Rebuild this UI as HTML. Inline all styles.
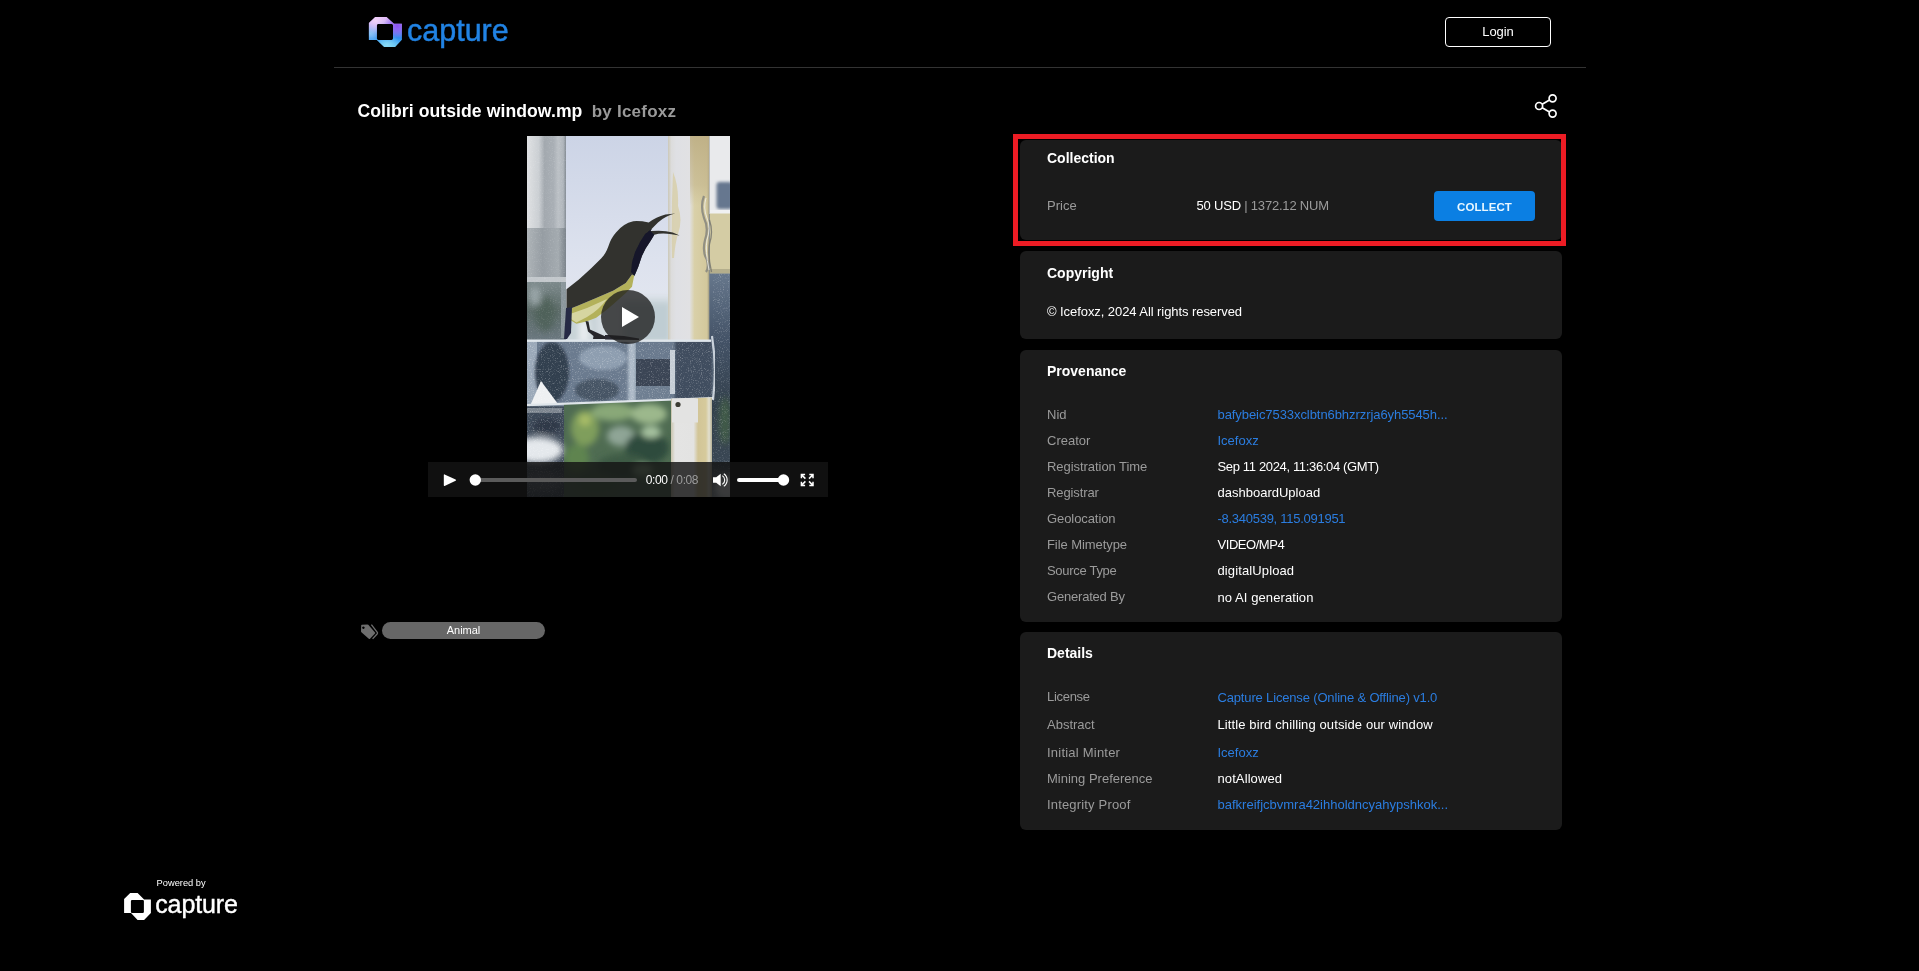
<!DOCTYPE html>
<html lang="en">
<head>
<meta charset="utf-8">
<title>Colibri outside window.mp by Icefoxz - Capture</title>
<style>
*{box-sizing:border-box;margin:0;padding:0}
html,body{width:1919px;height:971px;overflow:hidden;background:#000;color:#fff;
  font-family:"Liberation Sans",sans-serif;font-size:13px;-webkit-font-smoothing:antialiased}
a{color:#2b7de0;text-decoration:none}
.page{position:relative;width:1919px;height:971px;will-change:transform}

/* header */
header{position:absolute;left:334px;top:0;width:1252px;height:68px;border-bottom:1px solid #333}
.logo{position:absolute;left:34px;top:15px;width:142px;height:34px}
.login{position:absolute;left:1111px;top:17px;width:106px;height:30px;border:1px solid #fff;border-radius:4px;
  background:#000;color:#fff;font:13px "Liberation Sans",sans-serif;text-align:center;line-height:25px;letter-spacing:-.1px;padding:0 0 2px}

/* title row */
.title{position:absolute;left:357.5px;top:99px;height:24px;line-height:24px;font-size:17.6px;font-weight:bold;white-space:nowrap;letter-spacing:.07px}
.title .by{color:#9a9a9a;margin-left:4.3px;font-size:17px;letter-spacing:.23px}
.share{position:absolute;left:1533px;top:93px;width:26px;height:26px}

/* left column */
.left{position:absolute;left:357px;top:136px;width:542px}
.video{position:absolute;left:71px;top:0;width:400px;height:361px;background:#000;overflow:hidden}
.video svg.frame{position:absolute;left:99px;top:0;width:203px;height:361px}
.bigplay{position:absolute;left:173px;top:154px;width:54px;height:54px;border-radius:50%;background:rgba(28,28,28,.78)}
.bigplay:after{content:"";position:absolute;left:21px;top:17px;border-left:17px solid #fff;border-top:10px solid transparent;border-bottom:10px solid transparent}
.controls{position:absolute;left:0;top:326px;width:400px;height:35px;background:rgba(20,20,20,.82)}
.controls svg{position:absolute;left:0;top:0}
.tags{position:absolute;left:0;top:486px;height:18px}
.tags svg{position:absolute;left:3px;top:1px}
.tag{position:absolute;left:25px;top:0;width:163px;height:17px;border-radius:9px;background:#666;color:#fff;font-size:11px;line-height:17px;text-align:center}

footer{position:absolute;left:118px;top:875px;width:130px;height:50px}

/* right column */
.right{position:absolute;left:1020px;top:140px;width:542px}
.card{background:#1b1b1b;border-radius:6px;padding:0 27px;margin-bottom:11px;position:relative}
.card h3{font-size:14px;font-weight:bold;line-height:20px;padding-top:11px}
#collection h3{padding-top:8px}
#copyright h3{padding-top:12px}
.hl{position:absolute;left:1013px;top:134px;width:553px;height:112px;border:5px solid #ec1c24;pointer-events:none}
.rows{padding-top:21px}
#details .rows{padding-top:21px}
.row.tall{height:28px;line-height:28px}
.price{position:absolute;left:27px;top:51px;height:30px;line-height:30px;width:488px;white-space:nowrap}
.price .k{color:#9b9b9b;position:absolute;left:0}
.price .amt{position:absolute;left:149.5px;color:#fff;letter-spacing:-.2px}
.price .num{color:#9b9b9b}
.collect{position:absolute;left:387px;top:0;width:101px;height:30px;border:0;border-radius:4px;background:#0b7fe3;color:#e9f7ff;
  font:bold 11.5px "Liberation Sans",sans-serif;letter-spacing:.1px;text-align:center;line-height:32px}
.copy{position:absolute;left:27px;top:51px;line-height:20px;white-space:nowrap}
.row{display:flex;height:26px;line-height:26px;white-space:nowrap}
.row .k{width:170.5px;color:#9b9b9b}
.row .v{color:#fff}
.row a.v{color:#2b7de0}
</style>
</head>
<body>
<div class="page">

<header>
  <div class="logo">
    <svg width="142" height="34" viewBox="0 0 142 34">
      <defs>
        <linearGradient id="lgA" x1="0" y1="0" x2="0" y2="1"><stop offset="0" stop-color="#e2b6f6"/><stop offset=".32" stop-color="#a99af3"/><stop offset=".7" stop-color="#2d8ff0"/><stop offset="1" stop-color="#63c2f4"/></linearGradient>
        <radialGradient id="lgB" cx=".2" cy=".12" r=".45"><stop offset="0" stop-color="#f1d3f8"/><stop offset="1" stop-color="#f1d3f8" stop-opacity="0"/></radialGradient>
        <radialGradient id="lgC" cx=".86" cy=".3" r=".42"><stop offset="0" stop-color="#8a52f2"/><stop offset="1" stop-color="#8a52f2" stop-opacity="0"/></radialGradient>
        <radialGradient id="lgD" cx=".55" cy=".95" r=".4"><stop offset="0" stop-color="#8adcf6"/><stop offset="1" stop-color="#8adcf6" stop-opacity="0"/></radialGradient>
        <radialGradient id="lgE" cx=".05" cy=".55" r=".35"><stop offset="0" stop-color="#8cc6f6"/><stop offset="1" stop-color="#8cc6f6" stop-opacity="0"/></radialGradient>
        <path id="lgP" fill-rule="evenodd" d="M0 6.100 L6.300 0 H17.700 L25.100 6.900 H33 V22.800 L26.200 30 H15.300 L7.900 23 H0Z M9.400 7 Q8 7 8 8.400 V21.600 Q8 23 9.400 23 H22.700 Q24.100 23 24.100 21.600 V8.400 Q24.100 7 22.700 7Z"/>
      </defs>
      <g transform="translate(.9 1.900)">
        <use href="#lgP" fill="url(#lgA)"/><use href="#lgP" fill="url(#lgE)"/><use href="#lgP" fill="url(#lgB)"/><use href="#lgP" fill="url(#lgC)"/><use href="#lgP" fill="url(#lgD)"/>
      </g>
      <text x="39" y="25.900" font-family="Liberation Sans, sans-serif" font-size="30.500" fill="#2183e4" stroke="#2183e4" stroke-width=".45">capture</text>
    </svg>
  </div>
  <button class="login">Login</button>
</header>

<h1 class="title">Colibri outside window.mp <span class="by">by Icefoxz</span></h1>
<div class="share">
  <svg width="26" height="26" viewBox="0 0 26 26" fill="none" stroke="#fff" stroke-width="1.700">
    <circle cx="19.600" cy="5.300" r="3.500"/><circle cx="6.100" cy="13" r="3.500"/><circle cx="19.600" cy="20.600" r="3.500"/>
    <path d="M9.200 11.300 L16.500 7 M9.200 14.700 L16.500 18.900"/>
  </svg>
</div>

<section class="left">
  <div class="video">
<svg class="frame" viewBox="0 0 203 361" preserveAspectRatio="none">
  <defs>
    <linearGradient id="gSky" x1="0" y1="0" x2="0" y2="1"><stop offset="0" stop-color="#ccd4e6"/><stop offset=".6" stop-color="#dde2ee"/><stop offset="1" stop-color="#e6e9f0"/></linearGradient>
    <linearGradient id="gLp" x1="0" y1="0" x2="1" y2="0"><stop offset="0" stop-color="#dfe1e3"/><stop offset=".3" stop-color="#cbcfd3"/><stop offset=".45" stop-color="#a3a9af"/><stop offset=".68" stop-color="#a9afb5"/><stop offset=".8" stop-color="#bcc1c6"/><stop offset=".93" stop-color="#b0b6bc"/><stop offset="1" stop-color="#838b93"/></linearGradient>
    <linearGradient id="gLp2" x1="0" y1="0" x2="1" y2="0"><stop offset="0" stop-color="#aeb4b8"/><stop offset=".4" stop-color="#969da3"/><stop offset=".8" stop-color="#a4abb0"/><stop offset="1" stop-color="#7c848c"/></linearGradient>
    <linearGradient id="gLp3" x1="0" y1="0" x2="0" y2="1"><stop offset="0" stop-color="#7d8a8c"/><stop offset=".5" stop-color="#5c6b68"/><stop offset="1" stop-color="#6b7880"/></linearGradient>
    <linearGradient id="gCream" x1="0" y1="0" x2="1" y2="0"><stop offset="0" stop-color="#cbc8b8"/><stop offset=".08" stop-color="#dcdcdc"/><stop offset=".2" stop-color="#dfe0e4"/><stop offset=".52" stop-color="#e1e1e3"/><stop offset=".64" stop-color="#d9d0a8"/><stop offset=".94" stop-color="#d3c89c"/><stop offset="1" stop-color="#99947e"/></linearGradient>
    <linearGradient id="gCreamTop" x1="0" y1="0" x2="0" y2="1"><stop offset="0" stop-color="#bdae84" stop-opacity=".9"/><stop offset=".7" stop-color="#c2b48c" stop-opacity=".55"/><stop offset="1" stop-color="#c8bc94" stop-opacity="0"/></linearGradient>
    <linearGradient id="gCream2" x1="0" y1="0" x2="1" y2="0"><stop offset="0" stop-color="#c9c4ac"/><stop offset=".1" stop-color="#e4e4e3"/><stop offset=".55" stop-color="#e3e3e2"/><stop offset=".66" stop-color="#d2c597"/><stop offset=".85" stop-color="#d6ca9c"/><stop offset=".93" stop-color="#e2dfcf"/><stop offset="1" stop-color="#b5b096"/></linearGradient>
    <linearGradient id="gSteelR" x1="0" y1="0" x2="0" y2="1"><stop offset="0" stop-color="#66778c"/><stop offset=".3" stop-color="#435266"/><stop offset=".6" stop-color="#33404c"/><stop offset=".85" stop-color="#3a4754"/><stop offset="1" stop-color="#8f99a3"/></linearGradient>
    <filter id="fB1" x="-5%" y="-5%" width="110%" height="110%"><feGaussianBlur stdDeviation=".7"/></filter>
    <filter id="fB2" x="-20%" y="-20%" width="140%" height="140%"><feGaussianBlur stdDeviation="1.800"/></filter>
    <filter id="fB3" x="-20%" y="-20%" width="140%" height="140%"><feGaussianBlur stdDeviation="3.200"/></filter>
    <filter id="fSpk" x="0" y="0" width="100%" height="100%"><feTurbulence type="fractalNoise" baseFrequency=".9" numOctaves="2" seed="7" result="n"/><feColorMatrix type="matrix" values="0 0 0 0 1  0 0 0 0 1  0 0 0 0 1  0 0 0 3.2 -1.75"/></filter>
    <clipPath id="cFrame"><rect width="203" height="361"/></clipPath>
    <clipPath id="cTrees"><rect x="37" y="262" width="108" height="99"/></clipPath>
    <clipPath id="cBar"><polygon points="0,204 186,204 186,262 0,269"/></clipPath>
  </defs>
  <g clip-path="url(#cFrame)">
    <rect width="203" height="361" fill="#7e8c9c"/>
    <!-- sky + distant buildings -->
    <rect x="38" y="0" width="104" height="206" fill="url(#gSky)"/>
    <g filter="url(#fB3)" opacity=".9">
      <rect x="36" y="160" width="110" height="50" fill="#d5dde2"/>
      <rect x="96" y="166" width="48" height="40" fill="#bccbd0"/>
      <rect x="40" y="176" width="30" height="30" fill="#c4d0d4"/>
      <rect x="52" y="184" width="10" height="22" fill="#e9eef0"/>
    </g>
    <!-- trees -->
    <g clip-path="url(#cTrees)">
      <rect x="37" y="262" width="108" height="99" fill="#4f6c52"/>
      <g filter="url(#fB3)">
        <ellipse cx="58" cy="292" rx="14" ry="18" fill="#7f9e5c"/>
        <ellipse cx="58" cy="284" rx="6" ry="6" fill="#a9bd68"/>
        <ellipse cx="86" cy="276" rx="22" ry="9" fill="#89a878"/>
        <ellipse cx="122" cy="278" rx="18" ry="10" fill="#9cb88c"/>
        <ellipse cx="94" cy="300" rx="14" ry="10" fill="#8fa596"/>
        <ellipse cx="120" cy="312" rx="22" ry="16" fill="#2f4b3c"/>
        <ellipse cx="96" cy="330" rx="26" ry="12" fill="#3c5a45"/>
        <ellipse cx="124" cy="296" rx="10" ry="6" fill="#a7c3a0"/>
        <ellipse cx="116" cy="334" rx="10" ry="6" fill="#8fb08c"/>
        <ellipse cx="50" cy="322" rx="12" ry="14" fill="#5e8450"/>
        <ellipse cx="70" cy="346" rx="20" ry="10" fill="#48694a"/>
      </g>
    </g>
    <!-- left post -->
    <rect x="0" y="0" width="39" height="94" fill="url(#gLp)"/>
    <rect x="0" y="92" width="39" height="52" fill="url(#gLp2)"/>
    <rect x="0" y="141" width="39" height="5" fill="#c3c8cc"/>
    <rect x="0" y="146" width="39" height="58" fill="url(#gLp3)"/>
    <rect x="34" y="146" width="5" height="56" fill="#8b979c"/>
    <g filter="url(#fB3)" opacity=".7"><ellipse cx="18" cy="178" rx="10" ry="18" fill="#4a5d52"/><ellipse cx="8" cy="160" rx="6" ry="10" fill="#aab6ba"/></g>
    <rect x="0" y="0" width="39" height="204" filter="url(#fSpk)" opacity=".12"/>
    <!-- cream post (upper) -->
    <rect x="141" y="0" width="41.500" height="205" fill="url(#gCream)"/>
    <rect x="163" y="0" width="19" height="70" fill="url(#gCreamTop)"/>
    <path d="M146 36 Q152 50 151 70 Q156 84 151 98 Q148 108 147 122 L145 122 Q144 80 146 36Z" fill="#d8cfa8" opacity=".8" filter="url(#fB1)"/>
    <!-- right strip -->
    <rect x="182.500" y="0" width="21" height="78" fill="#e9eaec"/>
    <g filter="url(#fB2)"><rect x="189.500" y="46" width="16" height="27" rx="3" fill="#66778f"/></g>
    <rect x="183" y="76" width="20" height="62" fill="#d4cca4"/>
    <rect x="183" y="74" width="20" height="3.500" fill="#f0f1f2"/>
    <rect x="183" y="133" width="20" height="4.500" fill="#b4ae8c"/>
    <rect x="182.500" y="137.500" width="21" height="224" fill="url(#gSteelR)"/>
    <path d="M177 60 q-4 10 0 22 q5 10 1 22 q-3 12 2 20 q2 8 -1 12" fill="none" stroke="#86867f" stroke-width="2.200" opacity=".85" filter="url(#fB1)"/>
    <path d="M182.500 84 q4 12 0 24 q-2 10 2 28" fill="none" stroke="#76766f" stroke-width="1.300" opacity=".85"/>
    <path d="M179 62 q-3 10 1 20 q4 10 0 22 q-2 10 2 30" fill="none" stroke="#f1f1ee" stroke-width="1" opacity=".8"/>
    <!-- horizontal bar -->
    <polygon points="0,204 186,204 186,262 0,269" fill="#6b7b8f"/>
    <g clip-path="url(#cBar)">
      <rect x="0" y="204" width="10" height="66" fill="#9ba9b9"/>
      <g filter="url(#fB2)">
        <ellipse cx="25" cy="236" rx="17" ry="30" fill="#333f4f"/>
        <ellipse cx="70" cy="254" rx="22" ry="11" fill="#475565"/>
        <ellipse cx="76" cy="222" rx="24" ry="12" fill="#8e9eb0"/>
        <rect x="101" y="204" width="8" height="66" fill="#adbac8"/>
        <rect x="148" y="204" width="38" height="62" fill="#414e5e"/>
      </g>
      <rect x="109" y="204" width="34" height="19" fill="#6a7a8e"/>
      <rect x="109" y="223" width="34" height="27" fill="#3a4555" filter="url(#fB1)"/>
      <rect x="109" y="250" width="34" height="16" fill="#6f7f92"/>
      <rect x="143" y="214" width="5" height="44" fill="#c6ced6" filter="url(#fB1)"/>
      <polygon points="3,270 14,245 31,268" fill="#eef0f2" filter="url(#fB1)"/>
      <rect x="0" y="204" width="186" height="66" filter="url(#fSpk)" opacity=".32"/>
    </g>
    <rect x="0" y="203.500" width="184" height="2.400" fill="#dfe6ec"/>
    <polygon points="0,268 186,261 186,263 0,270.300" fill="#dfe5ea"/>
    <path d="M185 200 q5 30 1 64" fill="none" stroke="#dfe6ee" stroke-width="2.200" opacity=".85" filter="url(#fB1)"/>
    <!-- lower left post -->
    <rect x="0" y="270.300" width="37" height="91" fill="#3f4b5a"/>
    <rect x="0" y="272" width="35" height="5" fill="#8c949c" opacity=".8"/>
    <g filter="url(#fB3)"><ellipse cx="10" cy="314" rx="26" ry="13" fill="#e4e8ec"/><ellipse cx="20" cy="290" rx="14" ry="8" fill="#2f3946"/><ellipse cx="16" cy="345" rx="20" ry="10" fill="#56616e"/></g>
    <rect x="0" y="270" width="37" height="91" filter="url(#fSpk)" opacity=".3"/>
    <!-- cream post (lower) -->
    <polygon points="144,263 185,261.500 185,361 144,361" fill="url(#gCream2)"/>
    <rect x="145" y="262.500" width="26" height="24" fill="#e3e3e2" filter="url(#fB1)"/>
    <circle cx="151" cy="268.500" r="2.600" fill="#3a3a32" filter="url(#fB1)"/>
    <!-- right lower reflections -->
    <g filter="url(#fB3)"><ellipse cx="198" cy="285" rx="6" ry="24" fill="#3f5a46"/><ellipse cx="200" cy="352" rx="12" ry="12" fill="#e6eaee"/></g>
    <rect x="186" y="138" width="17" height="223" filter="url(#fSpk)" opacity=".25"/>
    <!-- bird -->
    <g filter="url(#fB1)">
      <path d="M39.500 174.200 L51.900 169.300 L69.200 161.900 L86.500 154.500 L98.800 147.100 L105 138.400 L107.500 139.700 L106.900 141 L105 150.800 L98.800 157 L86.500 168.100 L79.100 174.200 L69.200 181.700 L59.300 185.400 L49.400 187.800 L43.200 184.100 L42 176.700Z" fill="#b3b15a"/>
      <path d="M43 178 L60 172 L80 163 Q72 174 60 181 L49.400 186.500 L44 183Z" fill="#dcdcae" opacity=".85"/>
      <path d="M148.300 77.600 Q139 79.500 131 86.500 L124.800 92.700 L123.500 95.100 Q136 93.800 145.800 96.400 L152.600 99.500 L144.600 98.200 Q134 96.300 127.300 98.800 L123.500 105 L118.600 112.400 L114.900 120 L111.200 131 L107.500 139.700 L105 138.400 L98.800 147.100 L86.500 154.500 L69.200 161.900 L51.900 169.300 L39.500 174.200 L39.500 153.200 L51.900 143.400 L64.200 132.200 L74.100 122.400 Q78.500 118.500 81.500 110 Q84 102 89 96.500 Q96 87.500 106.300 85.200 Q113 84.600 121.700 86.500 Q129 81 138.400 78.500Z" fill="#32332e"/>
      <path d="M124.800 92.700 L123.500 95.100 L127.300 98.800 L123.500 105 L118.600 112.400 L114.900 120 L111.200 131 L107.500 139.700 L104 136 L105 126 L108 116 L113 106 L118 98Z" fill="#17182a"/>
      <path d="M39 172 L45 171 L44 197 L40 203 L37 203Z" fill="#272c44"/>
      <path d="M58.500 185 L61.500 185.500 L63 193.500 L74.100 198.400 L81 201.500 L80 203 L66 203 L66.500 200 L61 195.500Z" fill="#26262c"/>
      <path d="M78 199 Q95 198.500 112 202.500 L112 204 L78 203.500Z" fill="#2a2a30"/>
    </g>
  </g>
</svg>
    <div class="bigplay"></div>
    <div class="controls">
<svg width="400" height="35" viewBox="0 0 400 35">
        <path d="M16.600 12.400 L27.600 17.400 Q28.600 18.100 27.600 18.800 L16.600 23.900 Q15.800 24.100 15.800 23.200 V13.100 Q15.800 12.200 16.600 12.400Z" fill="#fff"/>
        <rect x="47" y="16" width="162" height="4" rx="2" fill="#5b5b5b"/>
        <circle cx="47.300" cy="18" r="5.700" fill="#fff"/>
        <text x="217.800" y="22.100" font-family="Liberation Sans, sans-serif" font-size="12" fill="#fff" letter-spacing="-.4">0:00 <tspan fill="#9d9d9d">/ 0:08</tspan></text>
        <path d="M285 15.300 h3.200 l4.500 -3.600 v12.600 l-4.500 -3.600 h-3.200z" fill="#fff"/>
        <path d="M294.300 13.600 a5.200 5.200 0 0 1 0 8.800 M295.800 11.700 a7.600 7.600 0 0 1 0 12.600" fill="none" stroke="#fff" stroke-width="1.100"/>
        <rect x="309" y="15.900" width="48" height="4.200" rx="2.100" fill="#fff"/>
        <circle cx="355.500" cy="18" r="5.700" fill="#fff"/>
        <g fill="none" stroke="#fff" stroke-width="1.500">
          <path d="M373.400 16.300 v-3.700 h3.700 M373.400 12.600 l4 4"/>
          <path d="M385 16.300 v-3.700 h-3.700 M385 12.600 l-4 4"/>
          <path d="M373.400 19.700 v3.700 h3.700 M373.400 23.400 l4 -4"/>
          <path d="M385 19.700 v3.700 h-3.700 M385 23.400 l-4 -4"/>
        </g>
</svg>
</div>
  </div>
  <div class="tags">
    <svg width="20" height="18" viewBox="0 0 20 18">
      <path fill-rule="evenodd" fill="#6e6e6e" d="M1.200 2.600 Q1.100 1.900 1.900 1.800 L7.300 1.400 Q7.900 1.400 8.300 1.800 L15 9.400 Q15.500 10 15 10.600 L10 15.700 Q9.400 16.200 8.800 15.700 L1.400 9.200 Q1 8.800 1 8.300Z M3.400 3.400 a1.250 1.250 0 1 0 .01 0Z"/>
      <path fill="none" stroke="#6e6e6e" stroke-width="1.300" d="M11.400 1.700 L17.300 9.400 Q17.800 10.100 17.300 10.700 L12.600 15.900"/>
    </svg>
    <span class="tag">Animal</span></div>
</section>

<section class="right">
  <div class="card" id="collection" style="height:100px">
    <h3>Collection</h3>
    <div class="price">
      <span class="k">Price</span>
      <span class="amt">50 USD <span class="num">| 1372.12 NUM</span></span>
      <button class="collect">COLLECT</button>
    </div>
  </div>
  <div class="card" id="copyright" style="height:88px">
    <h3>Copyright</h3>
    <p class="copy" style="letter-spacing:-.07px">© Icefoxz, 2024 All rights reserved</p>
  </div>
  <div class="card" id="provenance" style="height:272px;margin-bottom:10px">
    <h3>Provenance</h3>
    <div class="rows">
      <div class="row"><span class="k">Nid</span><a class="v" style="letter-spacing:-.07px">bafybeic7533xclbtn6bhzrzrja6yh5545h...</a></div>
      <div class="row"><span class="k">Creator</span><a class="v">Icefoxz</a></div>
      <div class="row"><span class="k" style="letter-spacing:-.05px">Registration Time</span><span class="v" style="letter-spacing:-.35px">Sep 11 2024, 11:36:04 (GMT)</span></div>
      <div class="row"><span class="k" style="letter-spacing:-.1px">Registrar</span><span class="v">dashboardUpload</span></div>
      <div class="row"><span class="k" style="letter-spacing:-.08px">Geolocation</span><a class="v" style="letter-spacing:-.27px">-8.340539, 115.091951</a></div>
      <div class="row"><span class="k" style="letter-spacing:-.07px">File Mimetype</span><span class="v" style="letter-spacing:-.45px">VIDEO/MP4</span></div>
      <div class="row"><span class="k" style="letter-spacing:-.3px">Source Type</span><span class="v" style="letter-spacing:.12px">digitalUpload</span></div>
      <div class="row"><span class="k" style="letter-spacing:-.2px">Generated By</span><span class="v" style="letter-spacing:.08px;position:relative;top:1px">no AI generation</span></div>
    </div>
  </div>
  <div class="card" id="details" style="height:197.5px">
    <h3>Details</h3>
    <div class="rows">
      <div class="row" style="height:27px;line-height:28px"><span class="k" style="letter-spacing:-.3px;position:relative;top:-1px">License</span><a class="v" style="letter-spacing:-.16px">Capture License (Online &amp; Offline) v1.0</a></div>
      <div class="row" style="height:28px;line-height:28px;margin-bottom:1px"><span class="k">Abstract</span><span class="v" style="letter-spacing:.11px">Little bird chilling outside our window</span></div>
      <div class="row"><span class="k" style="letter-spacing:.22px">Initial Minter</span><a class="v">Icefoxz</a></div>
      <div class="row"><span class="k">Mining Preference</span><span class="v" style="letter-spacing:.1px">notAllowed</span></div>
      <div class="row"><span class="k" style="letter-spacing:.17px">Integrity Proof</span><a class="v">bafkreifjcbvmra42ihholdncyahypshkok...</a></div>
    </div>
  </div>
</section>
<div class="hl"></div>

<footer>
  <svg width="130" height="50" viewBox="0 0 130 50">
    <text x="38.600" y="10.700" font-family="Liberation Sans, sans-serif" font-size="9.300" fill="#fff">Powered by</text>
    <path transform="translate(6.100 18)" fill-rule="evenodd" fill="#fff" d="M0 6 L6.100 0 H13.500 L20 6.500 H26.800 V19.900 L20 26.900 H13.500 L6.900 20 H0Z M8 6.900 Q6.800 6.900 6.800 8.100 V18.700 Q6.800 19.900 8 19.900 H18.600 Q19.800 19.900 19.800 18.700 V8.100 Q19.800 6.900 18.600 6.900Z"/>
    <text x="37.200" y="38.100" font-family="Liberation Sans, sans-serif" font-size="25" letter-spacing="-.1" fill="#fff" stroke="#fff" stroke-width=".4">capture</text>
  </svg>
</footer>
</div>
</body>
</html>
